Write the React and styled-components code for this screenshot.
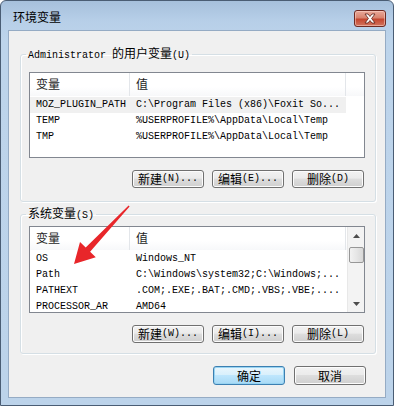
import React from "react";
import styled, { createGlobalStyle } from "styled-components";

const GlobalStyle = createGlobalStyle`
  html, body {
    margin: 0;
    padding: 0;
    background: #ffffff;
  }
  * {
    box-sizing: border-box;
  }
`;

const cjk = `"Noto Sans CJK SC", "Liberation Sans", sans-serif`;
const mono = `"Liberation Mono", "Noto Sans CJK SC", monospace`;

const Window = styled.div`
  position: relative;
  width: 394px;
  height: 406px;
  display: flex;
  flex-direction: column;
  padding: 0 7px 7px 7px;
  border: 1px solid #4a5d74;
  border-radius: 6px 6px 0 0;
  background: linear-gradient(180deg, #a6c0dc 0px, #b7cfe8 20px, #bdd4eb 40px, #bcd3ea 100%);
  overflow: hidden;
`;

const TitleBar = styled.div`
  height: 29px;
  display: flex;
  align-items: flex-start;
  justify-content: space-between;
`;

const Title = styled.div`
  font-family: ${cjk};
  font-size: 12px;
  line-height: 14px;
  margin: 9px 0 0 5px;
  color: #000;
`;

const CloseButton = styled.div`
  width: 32px;
  height: 17px;
  margin: 9px 0 0 0;
  border: 1px solid #6e2a22;
  border-radius: 3px;
  background: linear-gradient(180deg, #e9a99a 0%, #d8836f 45%, #c4462f 55%, #d2745e 100%);
  box-shadow: inset 0 0 0 1px rgba(255, 220, 210, 0.5);
  display: flex;
  align-items: center;
  justify-content: center;
`;

const Client = styled.div`
  flex: 1;
  display: flex;
  flex-direction: column;
  background: #f0f0f0;
  border: 1px solid #95abc4;
  padding: 15px 9px 0 11px;
`;

const Group = styled.fieldset`
  margin: ${(p) => (p.$first ? "0" : "4px 0 0 0")};
  padding: 0 10px ${(p) => p.$bottom}px 8px;
  border: 1px solid #d5dfe5;
  border-radius: 3px;
  box-shadow: inset 1px 1px 0 #ffffff, 1px 1px 0 #ffffff;
  min-width: 0;
`;

const Legend = styled.legend`
  padding: 0 2px;
  margin-left: -3px;
  font-family: ${cjk};
  font-size: 12px;
  line-height: 14px;
  color: #000;
`;

const LegendMono = styled.span`
  font-family: ${mono};
  font-size: 10px;
`;

const List = styled.div`
  margin-top: ${(p) => p.$top}px;
  height: ${(p) => p.$height}px;
  border: 1px solid #828790;
  background: #ffffff;
  display: flex;
  overflow: hidden;
`;

const ListBody = styled.div`
  flex: 1;
  min-width: 0;
  display: flex;
  flex-direction: column;
`;

const HeaderRow = styled.div`
  height: 24px;
  flex-shrink: 0;
  display: grid;
  grid-template-columns: 100px 216px 1fr;
  background: linear-gradient(180deg, #ffffff 0%, #ffffff 60%, #f7f8fa 100%);
  border-bottom: 1px solid #ffffff;
`;

const HeaderCell = styled.div`
  font-family: ${cjk};
  font-size: 12px;
  line-height: 22px;
  padding-left: 6px;
  color: #1e1e1e;
  border-right: 1px solid #e3e6ea;
`;

const Row = styled.div`
  height: 16px;
  flex-shrink: 0;
  display: grid;
  grid-template-columns: 316px 1fr;
`;

const RowCells = styled.div`
  display: grid;
  grid-template-columns: 100px 216px;
  background: ${(p) => (p.$selected ? "#f0f0f0" : "transparent")};
`;

const Cell = styled.div`
  font-family: ${mono};
  font-size: 10px;
  line-height: 16px;
  padding-left: 6px;
  white-space: pre;
  overflow: hidden;
  color: #000;
`;

const ScrollBar = styled.div`
  width: 17px;
  flex-shrink: 0;
  display: flex;
  flex-direction: column;
  align-items: center;
  background: #f3f3f3;
  border-left: 1px solid #e8e8e8;
`;

const ScrollArrow = styled.div`
  height: 17px;
  width: 100%;
  display: flex;
  align-items: center;
  justify-content: center;
`;

const Thumb = styled.div`
  width: 15px;
  height: 16px;
  margin-top: 3px;
  border: 1px solid #979797;
  border-radius: 2px;
  background: linear-gradient(90deg, #f2f2f2 0%, #e6e6e6 50%, #d8d8d8 100%);
`;

const ScrollTrack = styled.div`
  flex: 1;
`;

const ButtonRow = styled.div`
  display: flex;
  justify-content: flex-end;
  gap: ${(p) => p.$gap}px;
  margin: ${(p) => p.$top}px ${(p) => p.$right}px 0 0;
`;

const Button = styled.div`
  width: 72px;
  height: ${(p) => p.$h}px;
  display: flex;
  align-items: center;
  justify-content: center;
  border: 1px solid ${(p) => (p.$default ? "#3c7fb1" : "#707070")};
  border-radius: 3px;
  background: ${(p) =>
    p.$default
      ? "linear-gradient(180deg, #eaf6fd 0%, #d9f0fc 45%, #bee6fd 50%, #a7d9f5 100%)"
      : "linear-gradient(180deg, #f2f2f2 0%, #ebebeb 45%, #dddddd 50%, #cfcfcf 100%)"};
  box-shadow: inset 0 0 0 1px ${(p) => (p.$default ? "#98d4f2" : "#fcfcfc")};
  font-family: ${cjk};
  font-size: 12px;
  line-height: 14px;
  color: #000;
  white-space: pre;
`;

const Mnemonic = styled.span`
  font-family: ${mono};
  font-size: 10px;
`;

const Footer = styled.div`
  display: flex;
  justify-content: flex-end;
  gap: 9px;
  margin: 12px 10px 0 0;
`;

const Arrow = styled.svg`
  position: absolute;
  left: 0;
  top: 0;
  pointer-events: none;
`;

const userVars = [
  { name: "MOZ_PLUGIN_PATH", value: "C:\\Program Files (x86)\\Foxit So...", selected: true },
  { name: "TEMP", value: "%USERPROFILE%\\AppData\\Local\\Temp" },
  { name: "TMP", value: "%USERPROFILE%\\AppData\\Local\\Temp" },
];

const systemVars = [
  { name: "OS", value: "Windows_NT" },
  { name: "Path", value: "C:\\Windows\\system32;C:\\Windows;..." },
  { name: "PATHEXT", value: ".COM;.EXE;.BAT;.CMD;.VBS;.VBE;...." },
  { name: "PROCESSOR_AR", value: "AMD64" },
];

const VarList = ({ items, top, height, scroll }) => (
  <List $top={top} $height={height}>
    <ListBody>
      <HeaderRow>
        <HeaderCell>变量</HeaderCell>
        <HeaderCell>值</HeaderCell>
        <div />
      </HeaderRow>
      {items.map((v) => (
        <Row key={v.name}>
          <RowCells $selected={v.selected}>
            <Cell>{v.name}</Cell>
            <Cell>{v.value}</Cell>
          </RowCells>
        </Row>
      ))}
    </ListBody>
    {scroll && (
      <ScrollBar>
        <ScrollArrow>
          <svg width="7" height="4" viewBox="0 0 7 4">
            <path d="M0 4 L3.5 0 L7 4 Z" fill="#4d4d4d" />
          </svg>
        </ScrollArrow>
        <Thumb />
        <ScrollTrack />
        <ScrollArrow>
          <svg width="7" height="4" viewBox="0 0 7 4">
            <path d="M0 0 L3.5 4 L7 0 Z" fill="#4d4d4d" />
          </svg>
        </ScrollArrow>
      </ScrollBar>
    )}
  </List>
);

const ActionButtons = ({ keys, top }) => (
  <ButtonRow $gap={8} $top={top} $right={1}>
    <Button $h={18}>
      新建<Mnemonic>({keys[0]})...</Mnemonic>
    </Button>
    <Button $h={18}>
      编辑<Mnemonic>({keys[1]})...</Mnemonic>
    </Button>
    <Button $h={18}>
      删除<Mnemonic>({keys[2]})</Mnemonic>
    </Button>
  </ButtonRow>
);

export default function App() {
  return (
    <>
      <GlobalStyle />
      <Window>
        <TitleBar>
          <Title>环境变量</Title>
          <CloseButton>
            <svg width="14" height="11" viewBox="0 0 14 11">
              <path
                d="M2 1 L5 1 L7 3.5 L9 1 L12 1 L8.6 5.5 L12 10 L9 10 L7 7.5 L5 10 L2 10 L5.4 5.5 Z"
                fill="#ffffff"
                stroke="#5a2018"
                strokeWidth="0.8"
                strokeLinejoin="round"
              />
            </svg>
          </CloseButton>
        </TitleBar>
        <Client>
          <Group $first $bottom={13}>
            <Legend>
              <LegendMono>Administrator </LegendMono>的用户变量<LegendMono>(U)</LegendMono>
            </Legend>
            <VarList items={userVars} top={9} height={86} />
            <ActionButtons keys={["N", "E", "D"]} top={12} />
          </Group>
          <Group $bottom={10}>
            <Legend>
              系统变量<LegendMono>(S)</LegendMono>
            </Legend>
            <VarList items={systemVars} top={3} height={87} scroll />
            <ActionButtons keys={["W", "I", "L"]} top={12} />
          </Group>
          <Footer>
            <Button $h={19} $default>
              确定
            </Button>
            <Button $h={19}>取消</Button>
          </Footer>
        </Client>
        <Arrow width="394" height="406" viewBox="0 0 394 406">
          <polygon
            points="128.6,205.4 89.1,250.7 94.8,256.2 73,263 79,241 84.7,246.5 127.6,204.6"
            fill="#e8262a"
          />
        </Arrow>
      </Window>
    </>
  );
}
